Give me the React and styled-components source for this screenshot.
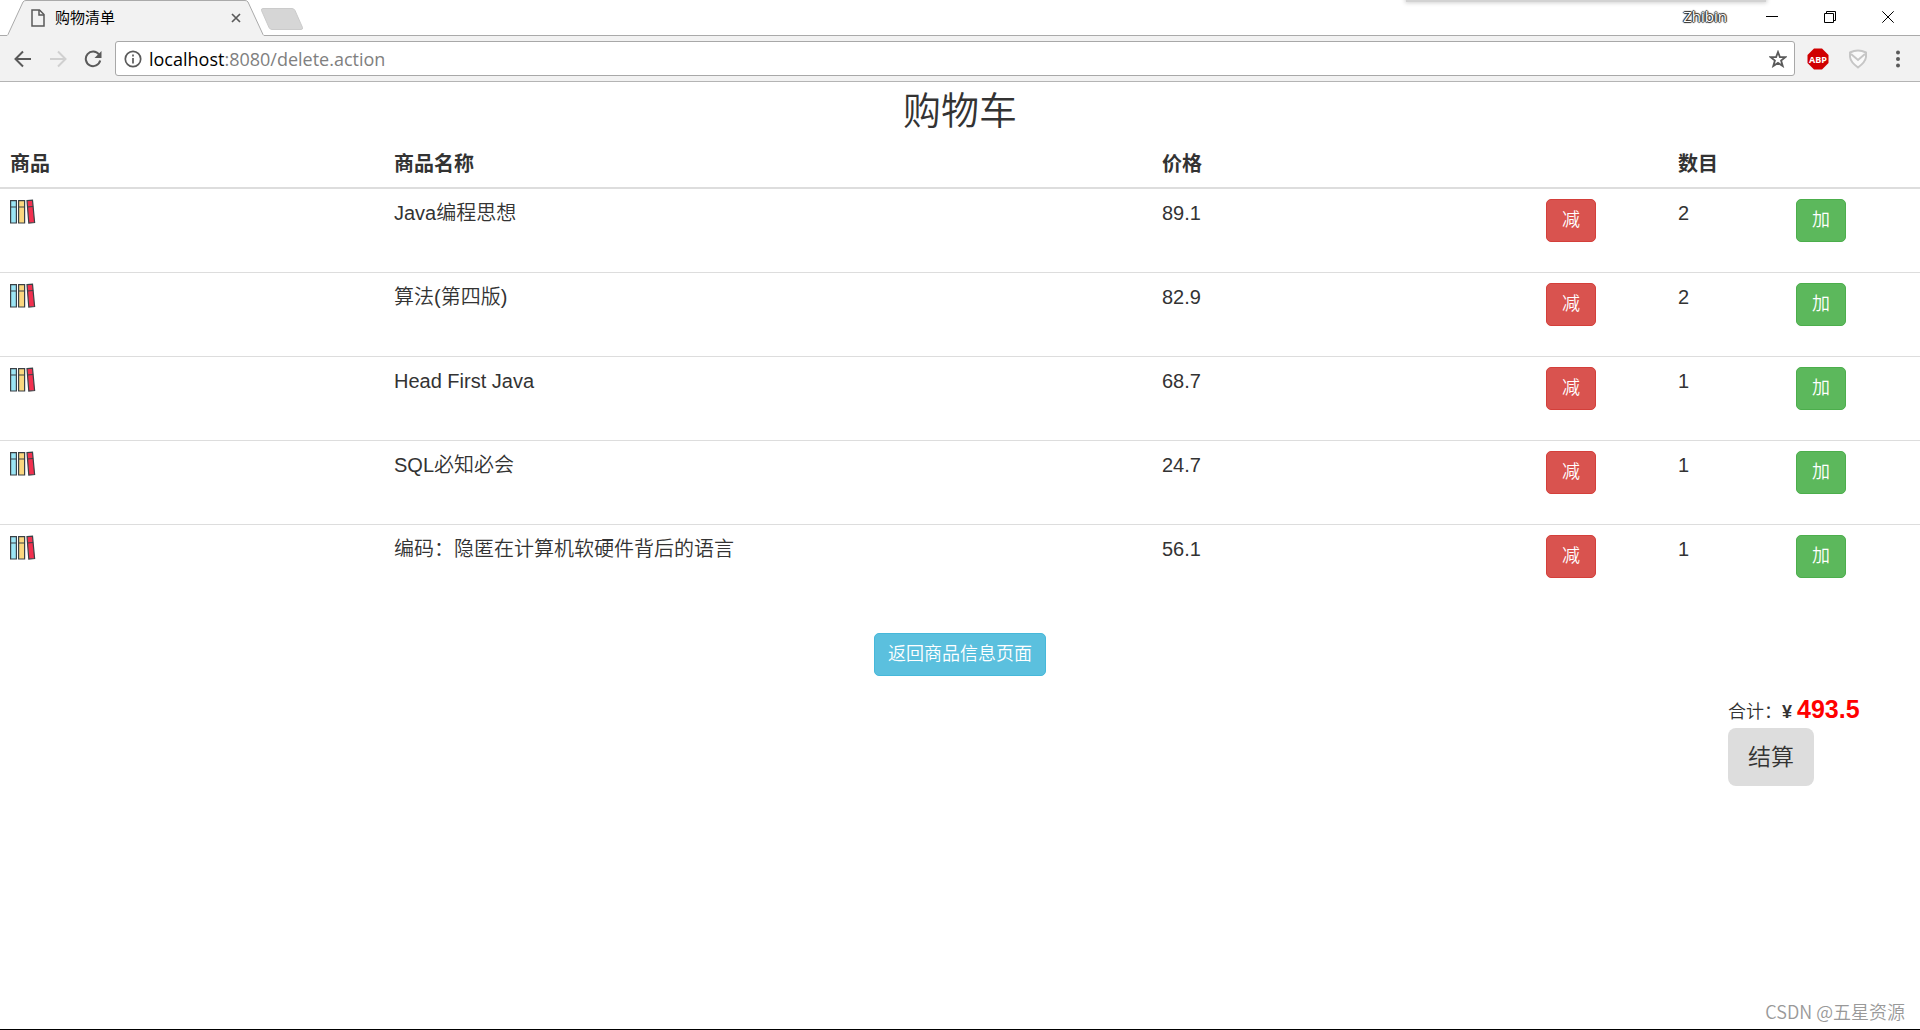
import React, {useState} from 'react'
import styled, {createGlobalStyle} from 'styled-components'

const GlobalStyle = createGlobalStyle`
* {
  box-sizing: border-box;
}
body {
  margin: 0;
  background-color: #fff;
  color: #333;
  font-family: "Liberation Sans", "Noto Sans CJK SC", sans-serif;
  font-size: 18px;
  font-weight: 350;
  line-height: 26px;
}
button, input {
  font-family: inherit;
  font-weight: inherit;
}
`

const products = [
  {id: 1, name: 'Java编程思想', price: 89.1, quantity: 2},
  {id: 2, name: '算法(第四版)', price: 82.9, quantity: 2},
  {id: 3, name: 'Head First Java', price: 68.7, quantity: 1},
  {id: 4, name: 'SQL必知必会', price: 24.7, quantity: 1},
  {id: 5, name: '编码：隐匿在计算机软硬件背后的语言', price: 56.1, quantity: 1},
]

function TitleBar() {
  return (
    <TitleBarPanel>
      <Tab>
        <TabShape viewBox='0 0 258 36' aria-hidden='true'>
          <path d='M0 35.5 L1 34.500 L16 2 Q17 .5 19 .5 H238 Q240 .5 241 2 L256 34.500 L257 35.500 V36 H0 Z' fill='#f2f2f2' />
          <path d='M0 35.5 L1 34.500 L16 2 Q17 .5 19 .5 H238 Q240 .5 241 2 L256 34.500 L257 35.500' fill='none' stroke='#aaa' />
        </TabShape>
        <svg width='14' height='18' viewBox='0 0 14 18' fill='none' stroke='#5a5a5a' strokeWidth='1.500' aria-hidden='true'>
          <path d='M1 1 H8.500 L13 5.500 V17 H1 Z' />
          <path d='M8 1 V6 H13' />
        </svg>
        <span>购物清单</span>
        <TabClose aria-label='关闭标签页'>
          <svg width='10' height='10' viewBox='0 0 10 10' stroke='#5a5a5a' strokeWidth='1.700'>
            <path d='M1 1 L9 9 M9 1 L1 9' />
          </svg>
        </TabClose>
      </Tab>
      <NewTab aria-label='新标签页'>
        <svg width='44' height='22' viewBox='0 0 44 22'>
          <path d='M3 .5 H32 Q34 .5 35 2.500 L42.500 19.500 Q43 21.500 41 21.500 H12 Q10 21.500 9 19.500 L1.500 2.500 Q1 .5 3 .5 Z' fill='#d6d6d6' stroke='#cbcbcb' />
        </svg>
      </NewTab>
      <UserName>Zhibin</UserName>
      <WindowButton aria-label='最小化'>
        <svg width='12' height='12' viewBox='0 0 12 12' stroke='#000' fill='none'>
          <path d='M0 5.500 H12' />
        </svg>
      </WindowButton>
      <WindowButton aria-label='还原'>
        <svg width='12' height='12' viewBox='0 0 12 12' stroke='#000' fill='none'>
          <path d='M.5 2.500 H9.500 V11.500 H.5 Z M2.500 2.500 V.5 H11.500 V9.500 H9.500' />
        </svg>
      </WindowButton>
      <WindowButton aria-label='关闭'>
        <svg width='12' height='12' viewBox='0 0 12 12' stroke='#000' fill='none'>
          <path d='M.3 .3 L11.700 11.700 M11.700 .3 L.3 11.700' />
        </svg>
      </WindowButton>
      <TopShadow />
    </TitleBarPanel>
  )
}

const TitleBarPanel = styled.div`
position: relative;
display: flex;
height: 36px;
padding: 0 3px 0 7px;
border-bottom: 1px solid #aaa;
`

const Tab = styled.div`
position: relative;
display: flex;
align-items: center;
width: 258px;
height: 36px;
padding: 0 24px 0 24px;
color: #000;
font-size: 15px;
font-weight: 400;
> svg, > span {
  position: relative;
}
> span {
  flex: 1;
  margin-left: 10px;
}
`

const TabShape = styled.svg`
&& {
  position: absolute;
  left: 0;
  top: 0;
  width: 258px;
  height: 36px;
}
`

const PlainButton = styled.button`
display: flex;
align-items: center;
justify-content: center;
padding: 0;
border: none;
background: none;
`

const TabClose = styled(PlainButton)`
position: relative;
height: 18px;
width: 10px;
`

const NewTab = styled(PlainButton)`
height: 22px;
margin: 8px auto 0 -5px;
`

const UserName = styled.span`
margin-right: 16px;
color: #fff;
font-family: "Open Sans", sans-serif;
font-size: 15px;
font-weight: 400;
line-height: 32px;
text-shadow: 1px 0 1px #222, -1px 0 1px #222, 0 1px 1px #222, 0 -1px 1px #222;
`

const WindowButton = styled(PlainButton)`
width: 58px;
height: 34px;
`

const TopShadow = styled.div`
position: absolute;
top: -4px;
right: 154px;
width: 360px;
height: 6px;
background-color: #d2d2d2;
box-shadow: 0 0 4px 1px #d2d2d2;
`

function ToolBar() {
  return (
    <ToolBarPanel>
      <ToolButton aria-label='后退'>
        <svg width='18' height='18' viewBox='0 0 18 18' fill='none' stroke='#5a5a5a' strokeWidth='2'>
          <path d='M17 9 H2 M9 1.500 L1.500 9 L9 16.500' />
        </svg>
      </ToolButton>
      <ToolButton aria-label='前进'>
        <svg width='18' height='18' viewBox='0 0 18 18' fill='none' stroke='#d0d0d0' strokeWidth='2'>
          <path d='M1 9 H16 M9 1.500 L16.500 9 L9 16.500' />
        </svg>
      </ToolButton>
      <ToolButton aria-label='刷新'>
        <svg width='18' height='18' viewBox='0 0 18 18' fill='none' stroke='#5a5a5a' strokeWidth='2'>
          <path d='M15 4.500 A7.300 7.300 0 1 0 16.200 10.500' />
          <path d='M17.500 1 V8 H10.500 Z' fill='#5a5a5a' stroke='none' />
        </svg>
      </ToolButton>
      <AddressBox>
        <svg width='18' height='18' viewBox='0 0 18 18' fill='none' stroke='#5a5a5a' strokeWidth='1.700' aria-hidden='true'>
          <circle cx='9' cy='9' r='7.700' />
          <path d='M9 8 V13.500 M9 4.500 V6.400' />
        </svg>
        <Address><b>localhost</b>:8080/delete.action</Address>
        <PlainButton aria-label='收藏'>
          <svg width='18' height='18' viewBox='0 0 18 18' fill='none' stroke='#5a5a5a' strokeWidth='1.800'>
            <path d='M9 2 L10.900 7 L16.300 7.200 L12.100 10.600 L13.700 16 L9 12.900 L4.300 16 L5.900 10.600 L1.700 7.200 L7.100 7 Z' />
          </svg>
        </PlainButton>
      </AddressBox>
      <ExtensionButton aria-label='Adblock Plus'>
        <svg width='22' height='22' viewBox='0 0 22 22'>
          <path d='M7 .5 H15 L21.500 7 V15 L15 21.500 H7 L.5 15 V7 Z' fill='#d00000' />
          <text x='11' y='14.500' textAnchor='middle' fill='#fff' fontFamily='Open Sans' fontSize='9' fontWeight='700'>ABP</text>
        </svg>
      </ExtensionButton>
      <ExtensionButton aria-label='安全扩展'>
        <svg width='18' height='20' viewBox='0 0 18 20' fill='none' stroke='#c6c6c6' strokeWidth='2'>
          <path d='M1 3.500 Q9 -.5 17 3.500 V8 Q16.500 13 9 18.500 Q1.500 13 1 8 Z' fill='#fafafa' />
          <path d='M2 5 L9 11 L16 5' />
        </svg>
      </ExtensionButton>
      <ExtensionButton aria-label='菜单'>
        <svg width='4' height='18' viewBox='0 0 4 18' fill='#5a5a5a'>
          <circle cx='2' cy='2.500' r='2' />
          <circle cx='2' cy='9' r='2' />
          <circle cx='2' cy='15.500' r='2' />
        </svg>
      </ExtensionButton>
    </ToolBarPanel>
  )
}

const ToolBarPanel = styled.div`
display: flex;
align-items: center;
height: 46px;
padding: 0 2px 0 5px;
background-color: #f2f2f2;
border-bottom: 1px solid #b4b4b4;
`

const ToolButton = styled(PlainButton)`
width: 35px;
height: 35px;
`

const ExtensionButton = styled(PlainButton)`
width: 40px;
height: 35px;
`

const AddressBox = styled.div`
flex: 1;
display: flex;
align-items: center;
height: 35px;
margin: 0 3px 0 5px;
padding: 0 7px 0 8px;
border: 1px solid #a8a8a8;
border-radius: 3px;
background-color: #fff;
`

const Address = styled.span`
flex: 1;
margin-left: 7px;
color: #808080;
font-family: "Open Sans", sans-serif;
font-size: 18px;
font-weight: 400;
line-height: 24px;
b {
  color: #000;
  font-weight: 400;
}
`

function Books() {
  return (
    <svg width='26' height='26' viewBox='0 0 26 26' stroke='#3b4146' strokeWidth='1.200' role='img' aria-label='商品'>
      <path d='M.6 1.600 H6.400 V24 H.6 Z' fill='#9be5f5' />
      <path d='M8.600 1.600 H14.600 V24 H8.600 Z' fill='#fbd77f' />
      <path d='M17 1.600 L22.500 1.200 L24.600 23.500 L18.800 24.100 Z' fill='#f2304f' />
      <path d='M.6 8 H6.400 M8.600 8 H14.600 M17.500 8 L23.100 7.500' />
    </svg>
  )
}

function CartRow(props) {
  return (
    <tr>
      <td><Books /></td>
      <td>{props.item.name}</td>
      <td>{props.item.price}</td>
      <td><Button $color='#d9534f' $border='#d43f3a' onClick={()=>{props.change(-1)}}>减</Button></td>
      <td>{props.item.quantity}</td>
      <td><Button $color='#5cb85c' $border='#4cae4c' onClick={()=>{props.change(1)}}>加</Button></td>
    </tr>
  )
}

const Button = styled.button`
height: 43px;
padding: 0 15px 1px;
border: 1px solid ${props => props.$border};
border-radius: 5px;
background-color: ${props => props.$color};
color: #fff;
font-size: 18px;
line-height: 26px;
`

const BackButton = styled(Button)`
padding: 0 13px 1px;
`

const CartTable = styled.table`
width: 100%;
table-layout: fixed;
border-collapse: collapse;
font-size: 20px;
line-height: 28px;
th {
  height: 48px;
  padding: 0 10px;
  border-bottom: 2px solid #ddd;
  text-align: left;
  font-weight: 700;
}
td {
  height: 84px;
  padding: 10px;
  border-top: 1px solid #ddd;
  vertical-align: top;
}
svg, button {
  display: block;
}
`

function App() {
  const [items, setItems] = useState(products)

  const changeQuantity = (id, step) => {
    setItems(items.map((item)=>(
      item.id === id ? {...item, quantity: Math.max(0, item.quantity + step)} : item
    )))
  }

  const total = items.reduce((sum, item) => sum + item.price * item.quantity, 0)

  return (
    <Page>
      <GlobalStyle />
      <TitleBar />
      <ToolBar />
      <Content>
        <Heading>购物车</Heading>
        <CartTable>
          <colgroup>
            <Col $width='20%' />
            <Col $width='40%' />
            <Col $width='20%' />
            <Col $width='132px' />
            <Col $width='118px' />
            <Col $width='auto' />
          </colgroup>
          <thead>
            <tr>
              <th>商品</th>
              <th>商品名称</th>
              <th>价格</th>
              <th></th>
              <th>数目</th>
              <th></th>
            </tr>
          </thead>
          <tbody>
            {
              items.map((item)=>(
                <CartRow
                  key = {item.id}
                  item = {item}
                  change = {(step)=>{changeQuantity(item.id, step)}}
                />
              ))
            }
          </tbody>
        </CartTable>
        <BackBox>
          <BackButton $color='#5bc0de' $border='#46b8da'>返回商品信息页面</BackButton>
        </BackBox>
        <Summary>
          <div>合计：<strong>¥ <em>{total.toFixed(1)}</em></strong></div>
          <Checkout>结算</Checkout>
        </Summary>
      </Content>
      <Watermark>CSDN @五星资源</Watermark>
    </Page>
  )
}

const Page = styled.div`
display: flex;
flex-direction: column;
min-height: 100vh;
border-bottom: 1px solid #000;
`

const Content = styled.main`
flex: 1;
`

const Heading = styled.h1`
margin: 0;
font-size: 38px;
font-weight: 350;
line-height: 58px;
text-align: center;
`

const Col = styled.col`
width: ${props => props.$width};
`

const BackBox = styled.div`
display: flex;
justify-content: center;
margin-top: 25px;
`

const Summary = styled.div`
margin: 18px 0 0 90%;
line-height: 31px;
white-space: nowrap;
strong {
  font-weight: 700;
}
em {
  color: red;
  font-size: 25px;
  font-style: normal;
}
`

const Checkout = styled.button`
display: block;
height: 58px;
padding: 0 20px 5px;
border: none;
border-radius: 8px;
background-color: #ddd;
color: #333;
font-size: 23px;
`

const Watermark = styled.footer`
padding: 0 15px 5px;
color: #999;
font-family: "Noto Sans CJK SC", sans-serif;
font-size: 18px;
text-align: right;
`

export default App
